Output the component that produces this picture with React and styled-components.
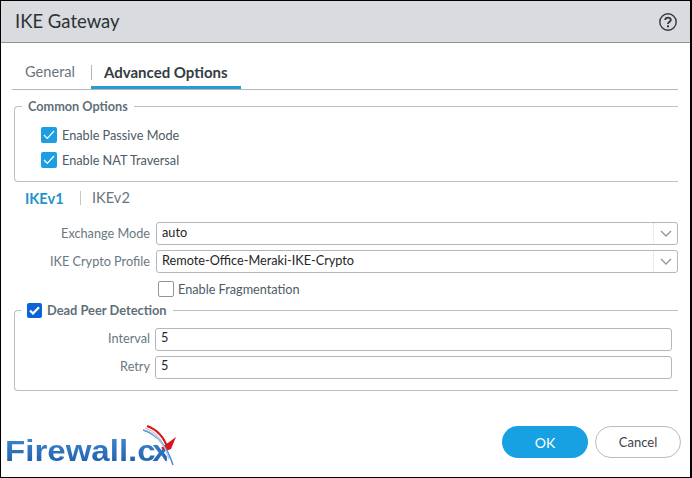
import React from "react";
import styled, { createGlobalStyle } from "styled-components";

const Global = createGlobalStyle`
    html, body { margin: 0; padding: 0; background: #ffffff; }
    body { font-family: Lato, "Open Sans", sans-serif; }
`;

export default function App() {
    return (
        <Dialog>
            <Global />
            <Header>
                <Title>IKE Gateway</Title>
                <HelpIcon />
            </Header>

            <Tabs>
                <Tab>General</Tab>
                <TabActive>Advanced Options</TabActive>
            </Tabs>

            <CommonBox>
                <Legend>Common Options</Legend>
                <CheckRow>
                    <BlueCheck />
                    <CheckLabel>Enable Passive Mode</CheckLabel>
                </CheckRow>
                <CheckRow>
                    <BlueCheck />
                    <CheckLabel>Enable NAT Traversal</CheckLabel>
                </CheckRow>
            </CommonBox>

            <SubTabs>
                <SubActive>IKEv1</SubActive>
                <SubTab>IKEv2</SubTab>
            </SubTabs>

            <FormRows>
                <SelectRow label="Exchange Mode" value="auto" />
                <SelectRow label="IKE Crypto Profile" value="Remote-Office-Meraki-IKE-Crypto" />
            </FormRows>

            <FragRow>
                <EmptyCheck />
                <CheckLabel>Enable Fragmentation</CheckLabel>
            </FragRow>

            <PeerBox>
                <PeerLegend>
                    <PeerCheck>
                        <svg width="11" height="9" viewBox="0 0 11 9">
                            <path d="M1 4.5 L4 7.5 L10 1.2" fill="none" stroke="#fff" strokeWidth="2.2" />
                        </svg>
                    </PeerCheck>
                    Dead Peer Detection
                </PeerLegend>
                <TextRow label="Interval" value="5" />
                <TextRow label="Retry" value="5" />
            </PeerBox>

            <Footer>
                <Logo>
                    <LogoText>Firewall.<LogoTail>cx</LogoTail></LogoText>
                    <LogoSwoosh />
                </Logo>
                <Buttons>
                    <OkButton>OK</OkButton>
                    <CancelButton>Cancel</CancelButton>
                </Buttons>
            </Footer>
        </Dialog>
    );
}

function HelpIcon() {
    return (
        <svg width="20" height="20" viewBox="0 0 20 20">
            <circle cx="10" cy="10" r="8.2" fill="none" stroke="#33393d" strokeWidth="1.4" />
            <path d="M7.3 8 C7.3 4.9 12.8 4.9 12.8 7.9 C12.8 9.8 10 9.8 10 12" fill="none" stroke="#33393d" strokeWidth="1.9" />
            <rect x="9" y="13.3" width="2" height="2" fill="#33393d" />
        </svg>
    );
}

function BlueCheck() {
    return (
        <CheckBox>
            <svg width="12" height="10" viewBox="0 0 12 10">
                <path d="M1 5 L4.3 8.4 L11 1" fill="none" stroke="#ffffff" strokeWidth="1.3" />
            </svg>
        </CheckBox>
    );
}

function SelectRow({ label, value }) {
    return (
        <Row>
            <RowLabel>{label}</RowLabel>
            <SelectBox>
                <SelectValue>{value}</SelectValue>
                <Arrow>
                    <svg width="12" height="7" viewBox="0 0 12 7">
                        <path d="M1 1 L6 6 L11 1" fill="none" stroke="#8b979e" strokeWidth="1.3" />
                    </svg>
                </Arrow>
            </SelectBox>
        </Row>
    );
}

function TextRow({ label, value }) {
    return (
        <PeerRow>
            <PeerLabel>{label}</PeerLabel>
            <TextBox>{value}</TextBox>
        </PeerRow>
    );
}

function LogoSwoosh() {
    return (
        <SwooshSvg width="36" height="44" viewBox="0 0 36 44">
            <path d="M4 2 C13 5 21 13 25 25" fill="none" stroke="#d9141c" strokeWidth="2" />
            <path d="M2 4 C11 7 18 14 22 24" fill="none" stroke="#e9a0a0" strokeWidth="1" />
            <path d="M18 24 L33 13 L28 25 L23 27 Z" fill="#d9141c" />
            <path d="M0 6 C13 10 24 22 30 41" fill="none" stroke="#4a8fd4" strokeWidth="1.5" />
            <path d="M3 6 C14 11 22 21 26 35" fill="none" stroke="#a6c9ec" strokeWidth="1.2" />
        </SwooshSvg>
    );
}

const Dialog = styled.div`
    width: 692px;
    height: 478px;
    box-sizing: border-box;
    border-top: 1px solid #000;
    border-left: 1px solid #000;
    border-right: 2px solid #000;
    border-bottom: 1px solid #000;
    background: #ffffff;
    display: flex;
    flex-direction: column;
    overflow: hidden;
`;

const Header = styled.div`
    height: 42px;
    flex: none;
    box-sizing: border-box;
    background: #d9dbde;
    border-bottom: 1px solid #8f9396;
    display: flex;
    align-items: center;
    justify-content: space-between;
    padding: 0 12px 0 14px;
`;

const Title = styled.div`
    font-size: 18.5px;
    line-height: 22px;
    margin-top: -2px;
    color: #2c3338;
`;

const Tabs = styled.div`
    margin: 18px 12px 0 11px;
    height: 28px;
    display: flex;
    border-bottom: 1px solid #b4b7b9;
`;

const Tab = styled.div`
    width: 79px;
    padding: 2px 0 0 13px;
    box-sizing: border-box;
    font-size: 14.6px;
    line-height: 18px;
    color: #69757c;
`;

const TabActive = styled.div`
    position: relative;
    width: 150px;
    height: 28px;
    box-sizing: border-box;
    padding: 2px 0 0 13px;
    font-size: 15px;
    line-height: 18px;
    font-weight: 700;
    color: #333c43;
    border-bottom: 3px solid #2a9bd1;
    &::before {
        content: "";
        position: absolute;
        left: 0;
        top: 4px;
        width: 1px;
        height: 15px;
        background: #b4b7b9;
    }
`;

const CommonBox = styled.fieldset`
    margin: 8px 12px 0 13px;
    padding: 13px 0 0 0;
    height: 84px;
    box-sizing: border-box;
    border: 1px solid #bcbfc1;
    border-right: none;
    border-radius: 4px 0 0 4px;
    display: flex;
    flex-direction: column;
    gap: 9px;
`;

const Legend = styled.legend`
    margin-left: 7px;
    padding: 0 6px;
    font-size: 12.7px;
    line-height: 16px;
    font-weight: 700;
    color: #5f6f79;
`;

const CheckRow = styled.div`
    margin-left: 26px;
    display: flex;
    align-items: center;
    gap: 5px;
    height: 16px;
`;

const CheckBox = styled.span`
    width: 16px;
    height: 16px;
    border-radius: 2px;
    background: #1c9ee2;
    display: flex;
    align-items: center;
    justify-content: center;
`;

const CheckLabel = styled.span`
    font-size: 12.7px;
    color: #4d5b64;
`;

const SubTabs = styled.div`
    margin: 8px 0 0 24px;
    height: 16px;
    display: flex;
    align-items: center;
`;

const SubActive = styled.div`
    width: 55px;
    font-size: 14.6px;
    font-weight: 700;
    color: #1f93cf;
`;

const SubTab = styled.div`
    font-size: 14.6px;
    color: #69757c;
    padding-left: 11px;
    border-left: 1px solid #c4c7c9;
    line-height: 14px;
`;

const FormRows = styled.div`
    margin-top: 16px;
    display: flex;
    flex-direction: column;
    gap: 5px;
`;

const Row = styled.div`
    display: flex;
    align-items: center;
    height: 23px;
`;

const RowLabel = styled.div`
    width: 149px;
    padding-bottom: 2px;
    text-align: right;
    font-size: 12.7px;
    color: #6a777f;
`;

const SelectBox = styled.div`
    margin-left: 6px;
    width: 522px;
    height: 23px;
    box-sizing: border-box;
    border: 1px solid #b4b8bb;
    border-radius: 3px;
    display: flex;
    align-items: center;
    justify-content: space-between;
`;

const SelectValue = styled.span`
    padding: 0 0 4px 5px;
    font-size: 12.7px;
    color: #1f2428;
`;

const Arrow = styled.span`
    width: 23px;
    height: 100%;
    display: flex;
    align-items: center;
    justify-content: center;
    border-left: 1px dotted #d7d9db;
`;

const FragRow = styled.div`
    margin: 8px 0 0 157px;
    display: flex;
    align-items: center;
    gap: 4px;
    height: 16px;
`;

const EmptyCheck = styled.span`
    width: 14px;
    height: 14px;
    border: 1px solid #8f979c;
    border-radius: 2px;
`;

const PeerBox = styled.fieldset`
    margin: 5px 12px 0 13px;
    padding: 10px 0 0 0;
    height: 89px;
    box-sizing: border-box;
    border: 1px solid #bcbfc1;
    border-right: none;
    border-radius: 4px 0 0 4px;
    display: flex;
    flex-direction: column;
    gap: 5px;
`;

const PeerLegend = styled.legend`
    margin-left: 6px;
    padding: 0 6px;
    height: 16px;
    display: flex;
    align-items: center;
    gap: 5px;
    font-size: 12.85px;
    font-weight: 700;
    color: #5f6f79;
`;

const PeerCheck = styled.span`
    width: 15px;
    height: 15px;
    border-radius: 2px;
    background: #0b63d8;
    display: flex;
    align-items: center;
    justify-content: center;
`;

const PeerRow = styled.div`
    display: flex;
    align-items: center;
    height: 23px;
`;

const PeerLabel = styled.div`
    width: 135px;
    padding-bottom: 4px;
    text-align: right;
    font-size: 12.7px;
    color: #6a777f;
`;

const TextBox = styled.div`
    margin-left: 5px;
    width: 517px;
    height: 23px;
    box-sizing: border-box;
    border: 1px solid #b4b8bb;
    border-radius: 3px;
    padding-left: 5px;
    font-size: 12.7px;
    line-height: 16px;
    color: #1f2428;
`;

const Footer = styled.div`
    flex: 1;
    display: flex;
    justify-content: space-between;
    align-items: flex-start;
`;

const Logo = styled.div`
    position: relative;
    margin: 45px 0 0 4px;
`;

const LogoText = styled.div`
    font-family: "Liberation Sans", sans-serif;
    font-size: 29px;
    line-height: 30px;
    font-weight: 700;
    white-space: nowrap;
    transform: scaleX(1.14);
    transform-origin: left center;
    background: linear-gradient(#3f88d2, #1d5ca8);
    -webkit-background-clip: text;
    background-clip: text;
    color: transparent;
`;

const LogoTail = styled.span`
    letter-spacing: -3px;
`;

const SwooshSvg = styled.svg`
    position: absolute;
    left: 138px;
    top: -12px;
`;

const Buttons = styled.div`
    margin: 35px 9px 0 0;
    display: flex;
    gap: 7px;
`;

const OkButton = styled.button`
    width: 86px;
    height: 32px;
    border: none;
    border-radius: 16px;
    background: #17a0e2;
    color: #ffffff;
    font-family: inherit;
    font-size: 14px;
`;

const CancelButton = styled.button`
    width: 86px;
    height: 32px;
    box-sizing: border-box;
    border: 1px solid #b9bcbe;
    border-radius: 16px;
    background: #ffffff;
    color: #3b4348;
    font-family: inherit;
    font-size: 13px;
`;
